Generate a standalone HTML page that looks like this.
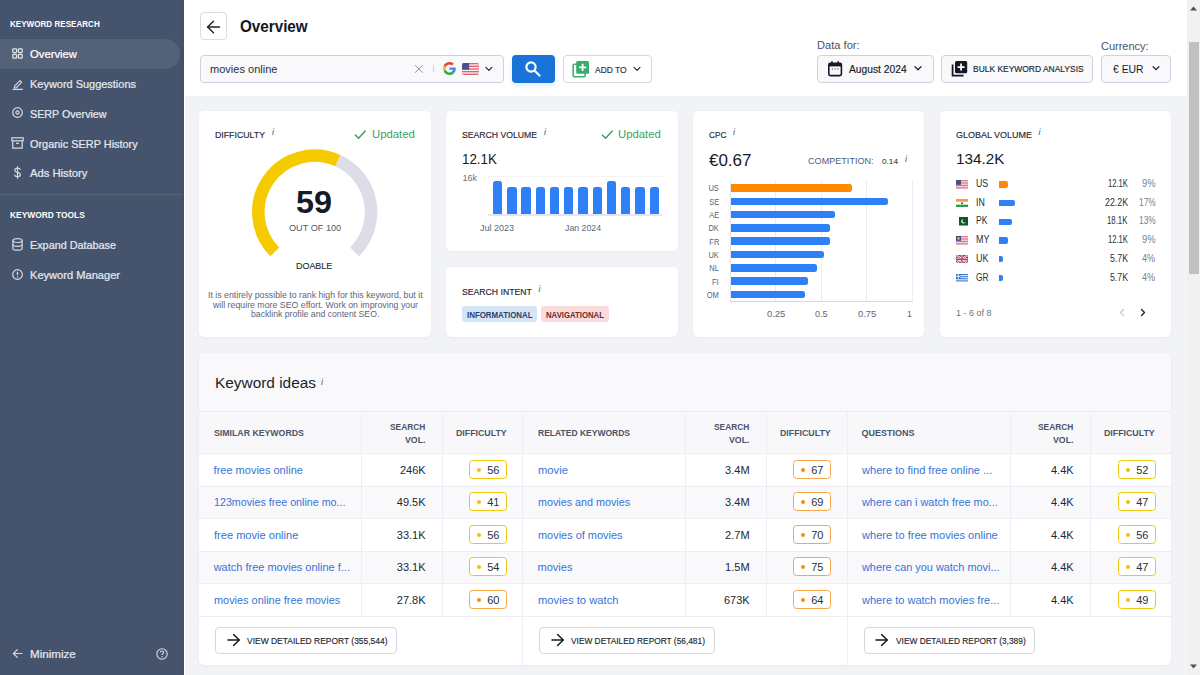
<!DOCTYPE html>
<html><head><meta charset="utf-8"><style>
html,body{margin:0;padding:0;width:1200px;height:675px;overflow:hidden;background:#f2f3f7}
body{position:relative;font-family:"Liberation Sans",sans-serif}
.t{position:absolute;white-space:nowrap}
.r{position:absolute;box-sizing:border-box}
</style></head><body>
<div class="r" style="left:0px;top:0px;width:1200px;height:675px;background:#f2f3f7"></div>
<div class="r" style="left:0px;top:0px;width:184px;height:675px;background:#45546c"></div>
<div class="r" style="left:182px;top:0px;width:1px;height:675px;background:#3e4c63"></div>
<div class="r" style="left:184px;top:0px;width:1px;height:675px;background:#ffffff"></div>
<div class="r" style="left:184px;top:0px;width:1003px;height:96px;background:#fff"></div>
<div class="t" style="left:9.50px;top:19.00px;font-size:9.4px;line-height:9.4px;color:#ffffff;font-weight:700;transform:scaleX(0.8618);transform-origin:left top;">KEYWORD RESEARCH</div>
<div class="r" style="left:0px;top:39px;width:180px;height:30px;background:#536279;border-radius:0 15px 15px 0"></div>
<svg class="r" style="left:12px;top:48px" width="11" height="11" viewBox="0 0 11 11"><g fill="none" stroke="#dfe3ea" stroke-width="1.3"><rect x="0.8" y="0.8" width="3.8" height="3.8" rx="0.8"/><rect x="6.4" y="0.8" width="3.8" height="3.8" rx="0.8"/><rect x="0.8" y="6.4" width="3.8" height="3.8" rx="0.8"/><rect x="6.4" y="6.4" width="3.8" height="3.8" rx="0.8"/></g></svg>
<div class="t" style="left:30.00px;top:49.00px;font-size:11px;line-height:11px;color:#ffffff;font-weight:400;-webkit-text-stroke:0.24px #ffffff;transform:scaleX(1.0246);transform-origin:left top;">Overview</div>
<div class="t" style="left:30.00px;top:79.00px;font-size:11px;line-height:11px;color:#e3e7ee;font-weight:400;-webkit-text-stroke:0.24px #e3e7ee;transform:scaleX(0.9960);transform-origin:left top;">Keyword Suggestions</div>
<div class="t" style="left:30.00px;top:109.00px;font-size:11px;line-height:11px;color:#e3e7ee;font-weight:400;-webkit-text-stroke:0.24px #e3e7ee;transform:scaleX(0.9733);transform-origin:left top;">SERP Overview</div>
<div class="t" style="left:30.00px;top:139.00px;font-size:11px;line-height:11px;color:#e3e7ee;font-weight:400;-webkit-text-stroke:0.24px #e3e7ee;transform:scaleX(0.9915);transform-origin:left top;">Organic SERP History</div>
<div class="t" style="left:30.00px;top:168.00px;font-size:11px;line-height:11px;color:#e3e7ee;font-weight:400;-webkit-text-stroke:0.24px #e3e7ee;transform:scaleX(1.0212);transform-origin:left top;">Ads History</div>
<svg class="r" style="left:12px;top:78px" width="11" height="12" viewBox="0 0 11 12"><g fill="none" stroke="#d5dae3" stroke-width="1.2" stroke-linecap="round" stroke-linejoin="round"><path d="M2.5 8.2 L8 2.7 L9.6 4.3 L4.1 9.8 L2.3 10 Z"/><path d="M1 11.4 H10.5"/></g></svg>
<svg class="r" style="left:12px;top:107px" width="11" height="11" viewBox="0 0 11 11"><g fill="none" stroke="#d5dae3" stroke-width="1.2"><circle cx="5.5" cy="5.5" r="4.8"/><circle cx="5.5" cy="5.5" r="1.6"/></g></svg>
<svg class="r" style="left:11px;top:137px" width="13" height="12" viewBox="0 0 13 12"><g fill="none" stroke="#d5dae3" stroke-width="1.2"><rect x="0.8" y="0.8" width="11.4" height="3" /><path d="M1.8 3.8 V11.2 H11.2 V3.8"/><path d="M5 6.3 H8"/></g></svg>
<svg class="r" style="left:13px;top:166px" width="9" height="13" viewBox="0 0 9 13"><g fill="none" stroke="#d5dae3" stroke-width="1.2" stroke-linecap="round"><path d="M4.5 0.8 V12.2"/><path d="M7.3 3.4 C7 2.5 6 2.2 4.5 2.2 C3 2.2 1.8 2.9 1.8 4.2 C1.8 5.6 3 6 4.5 6.4 C6 6.8 7.4 7.3 7.4 8.7 C7.4 10 6.2 10.6 4.5 10.6 C3 10.6 2 10.2 1.6 9.2"/></g></svg>
<div class="r" style="left:0px;top:194px;width:182px;height:1px;background:#56657c"></div>
<div class="t" style="left:9.60px;top:210.00px;font-size:9.4px;line-height:9.4px;color:#ffffff;font-weight:700;transform:scaleX(0.8940);transform-origin:left top;">KEYWORD TOOLS</div>
<div class="t" style="left:30.00px;top:240.00px;font-size:11px;line-height:11px;color:#e3e7ee;font-weight:400;-webkit-text-stroke:0.24px #e3e7ee;transform:scaleX(0.9834);transform-origin:left top;">Expand Database</div>
<div class="t" style="left:30.00px;top:270.00px;font-size:11px;line-height:11px;color:#e3e7ee;font-weight:400;-webkit-text-stroke:0.24px #e3e7ee;transform:scaleX(1.0082);transform-origin:left top;">Keyword Manager</div>
<svg class="r" style="left:12px;top:238px" width="11" height="13" viewBox="0 0 11 13"><g fill="none" stroke="#d5dae3" stroke-width="1.2"><ellipse cx="5.5" cy="2.6" rx="4.6" ry="1.9"/><path d="M0.9 2.6 V10.4 C0.9 11.5 3 12.2 5.5 12.2 C8 12.2 10.1 11.5 10.1 10.4 V2.6"/><path d="M0.9 6.5 C0.9 7.6 3 8.3 5.5 8.3 C8 8.3 10.1 7.6 10.1 6.5"/></g></svg>
<svg class="r" style="left:12px;top:269px" width="11" height="11" viewBox="0 0 11 11"><g fill="none" stroke="#d5dae3" stroke-width="1.2"><circle cx="5.5" cy="5.5" r="4.8"/></g><path d="M5.5 2.8 V6.2" stroke="#d5dae3" stroke-width="1.3"/><circle cx="5.5" cy="8" r="0.7" fill="#d5dae3"/></svg>
<div class="t" style="left:30.00px;top:649.00px;font-size:11px;line-height:11px;color:#e3e7ee;font-weight:400;-webkit-text-stroke:0.24px #e3e7ee;transform:scaleX(1.0554);transform-origin:left top;">Minimize</div>
<svg class="r" style="left:12px;top:648px" width="11" height="11" viewBox="0 0 11 11"><g fill="none" stroke="#d5dae3" stroke-width="1.2" stroke-linecap="round" stroke-linejoin="round"><path d="M10 5.5 H1.5"/><path d="M5.3 1.6 L1.4 5.5 L5.3 9.4"/></g></svg>
<svg class="r" style="left:156px;top:648px" width="12" height="12" viewBox="0 0 12 12"><g fill="none" stroke="#d5dae3" stroke-width="1.1"><circle cx="6" cy="6" r="5.2"/><path d="M4.3 4.6 C4.3 3.6 5 3 6 3 C7 3 7.7 3.6 7.7 4.5 C7.7 5.6 6.1 5.8 6.1 7"/></g><circle cx="6.1" cy="8.7" r="0.7" fill="#d5dae3"/></svg>
<div class="r" style="left:200px;top:12px;width:27px;height:28px;border:1px solid #d9dbe6;border-radius:4px;background:#fff"></div>
<svg class="r" style="left:206px;top:20px" width="15" height="14" viewBox="0 0 15 14"><g fill="none" stroke="#1b1f2a" stroke-width="1.4" stroke-linecap="round" stroke-linejoin="round"><path d="M13.5 7 H1.8"/><path d="M7.5 1.3 L1.6 7 L7.5 12.7"/></g></svg>
<div class="t" style="left:240.30px;top:19.00px;font-size:16px;line-height:16px;color:#14171f;font-weight:700;transform:scaleX(0.9508);transform-origin:left top;">Overview</div>
<div class="r" style="left:200px;top:55px;width:304px;height:28px;border:1px solid #cfd2de;border-radius:4px;background:#f9f9fb"></div>
<div class="t" style="left:210.00px;top:64.00px;font-size:11px;line-height:11px;color:#2a2f3b;font-weight:400;transform:scaleX(1.0035);transform-origin:left top;">movies online</div>
<svg class="r" style="left:414px;top:64px" width="10" height="10" viewBox="0 0 10 10"><g stroke="#8e94a2" stroke-width="1.0" stroke-linecap="round"><path d="M1.3 1.3 L8.5 8.5 M8.5 1.3 L1.3 8.5"/></g></svg>
<div class="r" style="left:432.5px;top:65px;width:1.0px;height:7px;background:#d3d6de"></div>
<svg class="r" style="left:443px;top:62px" width="13" height="13" viewBox="0 0 48 48"><path fill="#EA4335" d="M24 9.5c3.54 0 6.71 1.22 9.21 3.6l6.85-6.85C35.9 2.38 30.47 0 24 0 14.62 0 6.51 5.38 2.56 13.220l7.98 6.19C12.43 13.72 17.74 9.5 24 9.5z"/><path fill="#4285F4" d="M46.98 24.55c0-1.57-.15-3.09-.38-4.55H24v9.02h12.94c-.58 2.96-2.26 5.480-4.78 7.18l7.73 6c4.51-4.18 7.09-10.36 7.09-17.65z"/><path fill="#FBBC05" d="M10.53 28.59c-.48-1.45-.76-2.99-.76-4.59s.27-3.14.76-4.59l-7.98-6.19C.92 16.46 0 20.12 0 24c0 3.88.92 7.54 2.56 10.78l7.97-6.19z"/><path fill="#34A853" d="M24 48c6.48 0 11.93-2.13 15.89-5.81l-7.73-6c-2.15 1.45-4.92 2.3-8.16 2.3-6.26 0-11.57-4.22-13.47-9.91l-7.98 6.19C6.51 42.620 14.62 48 24 48z"/></svg>
<svg class="r" style="left:462px;top:63px" width="17" height="12" viewBox="0 0 17 12"><clipPath id="c46263"><rect width="17" height="12" rx="2"/></clipPath><g clip-path="url(#c46263)"><rect width="17" height="12" fill="#f6eef0"/><rect y="0.00" width="17" height="1.33" fill="#de6474"/><rect y="2.67" width="17" height="1.33" fill="#de6474"/><rect y="5.33" width="17" height="1.33" fill="#de6474"/><rect y="8.00" width="17" height="1.33" fill="#de6474"/><rect y="10.67" width="17" height="1.33" fill="#de6474"/><rect width="7.14" height="6.67" fill="#4e5189"/></g></svg>
<svg class="r" style="left:484px;top:65px" width="10" height="8" viewBox="0 0 10 8"><path d="M1.9 2.4 L4.9 5.4 L7.9 2.4" fill="none" stroke="#1f2430" stroke-width="1.15" stroke-linecap="round" stroke-linejoin="round"/></svg>
<div class="r" style="left:512px;top:55px;width:43px;height:28px;background:#1a73d8;border-radius:4px;box-shadow:0 3px 5px rgba(26,115,216,0.12)"></div>
<svg class="r" style="left:524px;top:60px" width="18" height="18" viewBox="0 0 18 18"><g fill="none" stroke="#fff" stroke-width="2.2" stroke-linecap="round"><circle cx="7" cy="7" r="4.6"/><path d="M10.5 10.5 L15.5 15.5"/></g></svg>
<div class="r" style="left:563px;top:55px;width:89px;height:28px;border:1px solid #d3d5e1;border-radius:4px;background:#fff"></div>
<svg class="r" style="left:572px;top:60px" width="19" height="18" viewBox="0 0 19 18"><rect x="1.2" y="4.2" width="12" height="12.6" rx="1.2" fill="#fff" stroke="#3fae73" stroke-width="1.6"/><rect x="4.2" y="1" width="12.8" height="12.8" rx="1.5" fill="#39ab6c"/><path d="M10.6 3.8 V11 M7 7.4 H14.2" stroke="#fff" stroke-width="1.8"/></svg>
<div class="t" style="left:594.60px;top:66.00px;font-size:9px;line-height:9px;color:#2a2f3b;font-weight:400;-webkit-text-stroke:0.14px #2a2f3b;transform:scaleX(0.9418);transform-origin:left top;">ADD TO</div>
<svg class="r" style="left:632px;top:65px" width="10" height="8" viewBox="0 0 10 8"><path d="M2 2.3 L5 5.3 L8 2.3" fill="none" stroke="#1f2430" stroke-width="1.1" stroke-linecap="round" stroke-linejoin="round"/></svg>
<div class="t" style="left:817.40px;top:41.00px;font-size:10px;line-height:10px;color:#4b5262;font-weight:400;transform:scaleX(1.1108);transform-origin:left top;">Data for:</div>
<div class="r" style="left:817px;top:55px;width:117px;height:28px;border:1px solid #cfd2de;border-radius:4px;background:#f9f9fb"></div>
<svg class="r" style="left:827px;top:60px" width="17" height="18" viewBox="0 0 17 18"><rect x="1.8" y="3.2" width="12.6" height="12.4" rx="1.6" fill="none" stroke="#151a26" stroke-width="1.6"/><rect x="1.8" y="3.2" width="12.6" height="3.2" fill="#151a26"/><path d="M5 1.2 V4 M11.2 1.2 V4" stroke="#151a26" stroke-width="1.6"/><path d="M4.8 9 H5.8 M7.6 9 H8.6 M10.4 9 H11.4" stroke="#151a26" stroke-width="1"/></svg>
<div class="t" style="left:848.80px;top:64.00px;font-size:10.5px;line-height:10.5px;color:#181c26;font-weight:400;-webkit-text-stroke:0.14px #181c26;transform:scaleX(0.9770);transform-origin:left top;">August 2024</div>
<svg class="r" style="left:913px;top:64px" width="10" height="8" viewBox="0 0 10 8"><path d="M2 2.8 L5 5.8 L8 2.8" fill="none" stroke="#1f2430" stroke-width="1.3" stroke-linecap="round" stroke-linejoin="round"/></svg>
<div class="r" style="left:941px;top:55px;width:152px;height:28px;border:1px solid #cfd2de;border-radius:4px;background:#f9f9fb"></div>
<svg class="r" style="left:950px;top:60px" width="20" height="18" viewBox="0 0 20 18"><path d="M2.6 4.5 V15.6 H13.6" fill="none" stroke="#151a26" stroke-width="1.8"/><rect x="5" y="1" width="12.2" height="12.2" rx="1.5" fill="#151a26"/><path d="M11.1 3.6 V10.6 M7.6 7.1 H14.6" stroke="#fff" stroke-width="1.8"/></svg>
<div class="t" style="left:973.40px;top:65.00px;font-size:9px;line-height:9px;color:#20242e;font-weight:400;-webkit-text-stroke:0.14px #20242e;transform:scaleX(0.9384);transform-origin:left top;">BULK KEYWORD ANALYSIS</div>
<div class="t" style="left:1101.30px;top:42.00px;font-size:10.4px;line-height:10.4px;color:#4b5262;font-weight:400;transform:scaleX(1.0580);transform-origin:left top;">Currency:</div>
<div class="r" style="left:1101px;top:55px;width:70px;height:28px;border:1px solid #cfd2de;border-radius:4px;background:#f9f9fb"></div>
<div class="t" style="left:1112.60px;top:64.00px;font-size:11px;line-height:11px;color:#181c26;font-weight:400;transform:scaleX(0.9446);transform-origin:left top;">€ EUR</div>
<svg class="r" style="left:1151px;top:64px" width="10" height="8" viewBox="0 0 10 8"><path d="M2.2 2.8 L5 5.6 L7.8 2.8" fill="none" stroke="#1f2430" stroke-width="1.3" stroke-linecap="round" stroke-linejoin="round"/></svg>
<div class="r" style="left:1187px;top:0px;width:13px;height:675px;background:#f1f1f1"></div>
<div class="r" style="left:1188.5px;top:42px;width:10.0px;height:232px;background:#c1c1c1"></div>
<svg class="r" style="left:1188px;top:4px" width="11" height="8" viewBox="0 0 11 8"><path d="M2 6.5 L5.5 2.5 L9 6.5 Z" fill="#505050"/></svg>
<svg class="r" style="left:1188px;top:663px" width="11" height="8" viewBox="0 0 11 8"><path d="M2 1.5 L5.5 5.5 L9 1.5 Z" fill="#505050"/></svg>
<div class="r" style="left:199px;top:111px;width:232px;height:226px;background:#fff;border-radius:5px;box-shadow:0 0 1px rgba(40,50,90,0.06),0 1px 3px rgba(40,50,90,0.035)"></div>
<div class="r" style="left:446px;top:111px;width:232px;height:140px;background:#fff;border-radius:5px;box-shadow:0 0 1px rgba(40,50,90,0.06),0 1px 3px rgba(40,50,90,0.035)"></div>
<div class="r" style="left:446px;top:267px;width:232px;height:70px;background:#fff;border-radius:5px;box-shadow:0 0 1px rgba(40,50,90,0.06),0 1px 3px rgba(40,50,90,0.035)"></div>
<div class="r" style="left:693px;top:111px;width:231px;height:226px;background:#fff;border-radius:5px;box-shadow:0 0 1px rgba(40,50,90,0.06),0 1px 3px rgba(40,50,90,0.035)"></div>
<div class="r" style="left:940px;top:111px;width:231px;height:226px;background:#fff;border-radius:5px;box-shadow:0 0 1px rgba(40,50,90,0.06),0 1px 3px rgba(40,50,90,0.035)"></div>
<div class="t" style="left:215.00px;top:131.00px;font-size:8.5px;line-height:8.5px;color:#1f2532;font-weight:400;-webkit-text-stroke:0.14px #1f2532;transform:scaleX(1.0311);transform-origin:left top;">DIFFICULTY</div>
<div class="t" style="left:272.00px;top:128.00px;font-size:9px;line-height:9px;color:#4a5368;font-weight:400;font-style:italic;">i</div>
<svg class="r" style="left:353.75px;top:129px" width="13.0" height="11" viewBox="0 0 13.0 11"><path d="M1.3 6 L4.6 9.3 L11.2 2" fill="none" stroke="#2f9f5e" stroke-width="1.35" stroke-linecap="round" stroke-linejoin="round"/></svg>
<div class="t" style="left:371.60px;top:129.00px;font-size:10.5px;line-height:10.5px;color:#35a466;font-weight:400;transform:scaleX(1.0784);transform-origin:left top;">Updated</div>
<svg class="r" style="left:190px;top:140px" width="250" height="140" viewBox="0 0 250 140"><path d="M84.82 111.88 A56.4 56.4 0 0 1 147.91 20.60" fill="none" stroke="#f5cb00" stroke-width="12.5"/><path d="M147.91 20.60 A56.4 56.4 0 0 1 164.58 111.88" fill="none" stroke="#dcdde6" stroke-width="12.5"/></svg>
<div class="t" style="left:296.40px;top:187.00px;font-size:30.5px;line-height:30.5px;color:#151a26;font-weight:700;transform:scaleX(1.0604);transform-origin:left top;">59</div>
<div class="t" style="left:288.80px;top:223.00px;font-size:9.5px;line-height:9.5px;color:#4f5868;font-weight:400;transform:scaleX(0.9631);transform-origin:left top;">OUT OF 100</div>
<div class="t" style="left:296.40px;top:262.00px;font-size:9.2px;line-height:9.2px;color:#262b36;font-weight:400;-webkit-text-stroke:0.14px #262b36;transform:scaleX(0.9730);transform-origin:left top;">DOABLE</div>
<div class="t" style="left:207.70px;top:291.00px;font-size:9px;line-height:9px;color:#5b6579;font-weight:400;transform:scaleX(0.9728);transform-origin:left top;">It is entirely possible to rank high for this keyword, but it</div>
<div class="t" style="left:212.54px;top:301.00px;font-size:9px;line-height:9px;color:#5b6579;font-weight:400;transform:scaleX(0.9749);transform-origin:left top;">will require more SEO effort. Work on improving your</div>
<div class="t" style="left:250.85px;top:310.00px;font-size:9px;line-height:9px;color:#5b6579;font-weight:400;transform:scaleX(0.9642);transform-origin:left top;">backlink profile and content SEO.</div>
<div class="t" style="left:462.00px;top:131.00px;font-size:8.5px;line-height:8.5px;color:#1f2532;font-weight:400;-webkit-text-stroke:0.14px #1f2532;transform:scaleX(1.0177);transform-origin:left top;">SEARCH VOLUME</div>
<div class="t" style="left:544.00px;top:128.00px;font-size:9px;line-height:9px;color:#4a5368;font-weight:400;font-style:italic;">i</div>
<svg class="r" style="left:600.5px;top:129px" width="13.0" height="11" viewBox="0 0 13.0 11"><path d="M1.3 6 L4.6 9.3 L11.2 2" fill="none" stroke="#2f9f5e" stroke-width="1.35" stroke-linecap="round" stroke-linejoin="round"/></svg>
<div class="t" style="left:618.30px;top:129.00px;font-size:10.5px;line-height:10.5px;color:#35a466;font-weight:400;transform:scaleX(1.0784);transform-origin:left top;">Updated</div>
<div class="t" style="left:462.00px;top:152.00px;font-size:14px;line-height:14px;color:#151a26;font-weight:400;transform:scaleX(0.9533);transform-origin:left top;">12.1K</div>
<div class="t" style="left:462.50px;top:174.00px;font-size:9px;line-height:9px;color:#6b7383;font-weight:400;">16k</div>
<div class="r" style="left:488px;top:176px;width:174px;height:1px;border-top:1px dotted #e6e8ee"></div>
<div class="r" style="left:488px;top:214px;width:174px;height:1.5px;background:#e4e6ee"></div>
<div class="r" style="left:493.0px;top:181.3px;width:9.300000000000011px;height:33.0px;background:#2f80f7;border-radius:2.5px 2.5px 0 0"></div>
<div class="r" style="left:507.23px;top:187.3px;width:9.299999999999955px;height:27.0px;background:#2f80f7;border-radius:2.5px 2.5px 0 0"></div>
<div class="r" style="left:521.46px;top:187.3px;width:9.299999999999955px;height:27.0px;background:#2f80f7;border-radius:2.5px 2.5px 0 0"></div>
<div class="r" style="left:535.69px;top:187.3px;width:9.299999999999955px;height:27.0px;background:#2f80f7;border-radius:2.5px 2.5px 0 0"></div>
<div class="r" style="left:549.92px;top:187.3px;width:9.300000000000068px;height:27.0px;background:#2f80f7;border-radius:2.5px 2.5px 0 0"></div>
<div class="r" style="left:564.15px;top:187.3px;width:9.300000000000068px;height:27.0px;background:#2f80f7;border-radius:2.5px 2.5px 0 0"></div>
<div class="r" style="left:578.38px;top:187.3px;width:9.299999999999955px;height:27.0px;background:#2f80f7;border-radius:2.5px 2.5px 0 0"></div>
<div class="r" style="left:592.61px;top:187.3px;width:9.299999999999955px;height:27.0px;background:#2f80f7;border-radius:2.5px 2.5px 0 0"></div>
<div class="r" style="left:606.84px;top:181.3px;width:9.299999999999955px;height:33.0px;background:#2f80f7;border-radius:2.5px 2.5px 0 0"></div>
<div class="r" style="left:621.07px;top:187.3px;width:9.299999999999955px;height:27.0px;background:#2f80f7;border-radius:2.5px 2.5px 0 0"></div>
<div class="r" style="left:635.3px;top:187.3px;width:9.300000000000068px;height:27.0px;background:#2f80f7;border-radius:2.5px 2.5px 0 0"></div>
<div class="r" style="left:649.53px;top:187.3px;width:9.300000000000068px;height:27.0px;background:#2f80f7;border-radius:2.5px 2.5px 0 0"></div>
<div class="t" style="left:480.25px;top:224.00px;font-size:9.3px;line-height:9.3px;color:#5e6677;font-weight:400;transform:scaleX(0.9672);transform-origin:left top;">Jul 2023</div>
<div class="t" style="left:564.70px;top:224.00px;font-size:9.3px;line-height:9.3px;color:#5e6677;font-weight:400;transform:scaleX(0.9433);transform-origin:left top;">Jan 2024</div>
<div class="t" style="left:462.00px;top:288.00px;font-size:8.8px;line-height:8.8px;color:#1f2532;font-weight:400;-webkit-text-stroke:0.14px #1f2532;transform:scaleX(0.9847);transform-origin:left top;">SEARCH INTENT</div>
<div class="t" style="left:538.50px;top:285.00px;font-size:9px;line-height:9px;color:#4a5368;font-weight:400;font-style:italic;">i</div>
<div class="r" style="left:462px;top:306px;width:75px;height:16px;background:#d5e5f8;border-radius:3px"></div>
<div class="t" style="left:466.70px;top:311.00px;font-size:8.3px;line-height:8.3px;color:#27406b;font-weight:700;transform:scaleX(0.9505);transform-origin:left top;">INFORMATIONAL</div>
<div class="r" style="left:541px;top:306px;width:68px;height:16px;background:#fadcdc;border-radius:3px"></div>
<div class="t" style="left:545.70px;top:311.00px;font-size:8.3px;line-height:8.3px;color:#6e2b2b;font-weight:700;transform:scaleX(0.9361);transform-origin:left top;">NAVIGATIONAL</div>
<div class="t" style="left:708.80px;top:131.00px;font-size:8.5px;line-height:8.5px;color:#1f2532;font-weight:400;-webkit-text-stroke:0.14px #1f2532;transform:scaleX(0.9702);transform-origin:left top;">CPC</div>
<div class="t" style="left:733.00px;top:128.00px;font-size:9px;line-height:9px;color:#4a5368;font-weight:400;font-style:italic;">i</div>
<div class="t" style="left:708.80px;top:153.00px;font-size:15.6px;line-height:15.6px;color:#151a26;font-weight:400;transform:scaleX(1.0876);transform-origin:left top;">€0.67</div>
<div class="t" style="left:808.20px;top:157.00px;font-size:9px;line-height:9px;color:#4f5d78;font-weight:400;transform:scaleX(1.0095);transform-origin:left top;">COMPETITION:</div>
<div class="t" style="left:882.40px;top:158.00px;font-size:8px;line-height:8px;color:#1c2130;font-weight:400;transform:scaleX(1.0283);transform-origin:left top;">0.14</div>
<div class="t" style="left:905.00px;top:155.00px;font-size:9px;line-height:9px;color:#4a5368;font-weight:400;font-style:italic;">i</div>
<div class="r" style="left:775.0px;top:181px;width:1.0px;height:120px;background:#ecedf2"></div>
<div class="r" style="left:820.5px;top:181px;width:1.0px;height:120px;background:#ecedf2"></div>
<div class="r" style="left:866.0px;top:181px;width:1.0px;height:120px;background:#ecedf2"></div>
<div class="r" style="left:911.5px;top:181px;width:1.0px;height:120px;background:#ecedf2"></div>
<div class="r" style="left:729.5px;top:181px;width:1.0px;height:120px;background:#e3e5ec"></div>
<div class="r" style="left:730px;top:300.5px;width:183px;height:1.1999999999999886px;background:#cfd8f0"></div>
<div class="r" style="left:730.5px;top:184.2px;width:121.0px;height:7.5px;background:#ff8a00;border-radius:0 2.5px 2.5px 0"></div>
<div class="t" style="left:707.18px;top:184.00px;font-size:8.5px;line-height:8.5px;color:#56637a;font-weight:400;transform:scaleX(0.88);transform-origin:right top;">US</div>
<div class="r" style="left:730.5px;top:197.5px;width:157.5px;height:7.5px;background:#2f80f7;border-radius:0 2.5px 2.5px 0"></div>
<div class="t" style="left:707.65px;top:198.00px;font-size:8.5px;line-height:8.5px;color:#56637a;font-weight:400;transform:scaleX(0.88);transform-origin:right top;">SE</div>
<div class="r" style="left:730.5px;top:210.8px;width:104.5px;height:7.5px;background:#2f80f7;border-radius:0 2.5px 2.5px 0"></div>
<div class="t" style="left:707.65px;top:211.00px;font-size:8.5px;line-height:8.5px;color:#56637a;font-weight:400;transform:scaleX(0.88);transform-origin:right top;">AE</div>
<div class="r" style="left:730.5px;top:224.1px;width:99.20000000000005px;height:7.5px;background:#2f80f7;border-radius:0 2.5px 2.5px 0"></div>
<div class="t" style="left:707.18px;top:224.00px;font-size:8.5px;line-height:8.5px;color:#56637a;font-weight:400;transform:scaleX(0.88);transform-origin:right top;">DK</div>
<div class="r" style="left:730.5px;top:237.4px;width:99.20000000000005px;height:7.5px;background:#2f80f7;border-radius:0 2.5px 2.5px 0"></div>
<div class="t" style="left:707.65px;top:238.00px;font-size:8.5px;line-height:8.5px;color:#56637a;font-weight:400;transform:scaleX(0.88);transform-origin:right top;">FR</div>
<div class="r" style="left:730.5px;top:250.7px;width:93.5px;height:7.5px;background:#2f80f7;border-radius:0 2.5px 2.5px 0"></div>
<div class="t" style="left:707.18px;top:251.00px;font-size:8.5px;line-height:8.5px;color:#56637a;font-weight:400;transform:scaleX(0.88);transform-origin:right top;">UK</div>
<div class="r" style="left:730.5px;top:264.0px;width:86.5px;height:7.5px;background:#2f80f7;border-radius:0 2.5px 2.5px 0"></div>
<div class="t" style="left:708.12px;top:264.00px;font-size:8.5px;line-height:8.5px;color:#56637a;font-weight:400;transform:scaleX(0.88);transform-origin:right top;">NL</div>
<div class="r" style="left:730.5px;top:277.3px;width:77.29999999999995px;height:7.5px;background:#2f80f7;border-radius:0 2.5px 2.5px 0"></div>
<div class="t" style="left:711.43px;top:278.00px;font-size:8.5px;line-height:8.5px;color:#56637a;font-weight:400;transform:scaleX(0.88);transform-origin:right top;">FI</div>
<div class="r" style="left:730.5px;top:290.6px;width:74.0px;height:7.5px;background:#2f80f7;border-radius:0 2.5px 2.5px 0"></div>
<div class="t" style="left:705.32px;top:291.00px;font-size:8.5px;line-height:8.5px;color:#56637a;font-weight:400;transform:scaleX(0.88);transform-origin:right top;">OM</div>
<div class="t" style="left:766.85px;top:310.00px;font-size:8.7px;line-height:8.7px;color:#5e6677;font-weight:400;transform:scaleX(1.0815);transform-origin:left top;">0.25</div>
<div class="t" style="left:815.25px;top:310.00px;font-size:8.7px;line-height:8.7px;color:#5e6677;font-weight:400;transform:scaleX(1.0337);transform-origin:left top;">0.5</div>
<div class="t" style="left:857.85px;top:310.00px;font-size:8.7px;line-height:8.7px;color:#5e6677;font-weight:400;transform:scaleX(1.0815);transform-origin:left top;">0.75</div>
<div class="t" style="left:906.97px;top:310.00px;font-size:8.7px;line-height:8.7px;color:#5e6677;font-weight:400;">1</div>
<div class="t" style="left:955.70px;top:131.00px;font-size:8.5px;line-height:8.5px;color:#1f2532;font-weight:400;-webkit-text-stroke:0.14px #1f2532;transform:scaleX(1.0563);transform-origin:left top;">GLOBAL VOLUME</div>
<div class="t" style="left:1038.50px;top:128.00px;font-size:9px;line-height:9px;color:#4a5368;font-weight:400;font-style:italic;">i</div>
<div class="t" style="left:955.90px;top:151.00px;font-size:15px;line-height:15px;color:#151a26;font-weight:400;transform:scaleX(1.0158);transform-origin:left top;">134.2K</div>
<svg class="r" style="left:956px;top:180.05px" width="12" height="8.5" viewBox="0 0 12 8.5"><rect width="12" height="8.5" fill="#f3d3d8"/><rect y="0.00" width="12" height="1.21" fill="#e07d8c"/><rect y="2.43" width="12" height="1.21" fill="#e07d8c"/><rect y="4.86" width="12" height="1.21" fill="#e07d8c"/><rect y="7.29" width="12" height="1.21" fill="#e07d8c"/><rect width="5" height="4.86" fill="#4a4f86"/></svg>
<div class="t" style="left:976.00px;top:179.00px;font-size:10px;line-height:10px;color:#2a2f3b;font-weight:400;transform:scaleX(0.8813);transform-origin:left top;">US</div>
<div class="r" style="left:999px;top:181.1px;width:8.700000000000045px;height:6.5px;background:#ff8a00;border-radius:0 2px 2px 0"></div>
<div class="t" style="left:1107.90px;top:179.00px;font-size:10px;line-height:10px;color:#2a2f3b;font-weight:400;transform:scaleX(0.7610);transform-origin:left top;">12.1K</div>
<div class="t" style="left:1141.90px;top:179.00px;font-size:10px;line-height:10px;color:#7a8190;font-weight:400;transform:scaleX(0.9273);transform-origin:left top;">9%</div>
<svg class="r" style="left:956px;top:198.75px" width="12" height="8.5" viewBox="0 0 12 8.5"><rect width="12" height="2.83" fill="#f59d3a"/><rect y="2.83" width="12" height="2.83" fill="#fff"/><rect y="5.67" width="12" height="2.83" fill="#2f9a3e"/><circle cx="6" cy="4.25" r="1" fill="#3a4a9a"/></svg>
<div class="t" style="left:976.00px;top:198.00px;font-size:10px;line-height:10px;color:#2a2f3b;font-weight:400;transform:scaleX(0.8800);transform-origin:left top;">IN</div>
<div class="r" style="left:999px;top:199.8px;width:16.299999999999955px;height:6.5px;background:#2f80f7;border-radius:0 2px 2px 0"></div>
<div class="t" style="left:1104.60px;top:198.00px;font-size:10px;line-height:10px;color:#2a2f3b;font-weight:400;transform:scaleX(0.8872);transform-origin:left top;">22.2K</div>
<div class="t" style="left:1138.60px;top:198.00px;font-size:10px;line-height:10px;color:#7a8190;font-weight:400;transform:scaleX(0.8350);transform-origin:left top;">17%</div>
<svg class="r" style="left:956px;top:217.45px" width="12" height="8.5" viewBox="0 0 12 8.5"><rect x="3" width="9" height="8.5" fill="#0b5a2a"/><rect width="3" height="8.5" fill="#fff"/><circle cx="7.6" cy="4.2" r="2.3" fill="#fff"/><circle cx="8.4" cy="3.7" r="2" fill="#0b5a2a"/></svg>
<div class="t" style="left:976.00px;top:216.00px;font-size:10px;line-height:10px;color:#2a2f3b;font-weight:400;transform:scaleX(0.8539);transform-origin:left top;">PK</div>
<div class="r" style="left:999px;top:218.5px;width:13.299999999999955px;height:6.5px;background:#2f80f7;border-radius:0 2px 2px 0"></div>
<div class="t" style="left:1107.40px;top:216.00px;font-size:10px;line-height:10px;color:#2a2f3b;font-weight:400;transform:scaleX(0.7801);transform-origin:left top;">18.1K</div>
<div class="t" style="left:1138.60px;top:216.00px;font-size:10px;line-height:10px;color:#7a8190;font-weight:400;transform:scaleX(0.8350);transform-origin:left top;">13%</div>
<svg class="r" style="left:956px;top:236.15px" width="12" height="8.5" viewBox="0 0 12 8.5"><rect width="12" height="8.5" fill="#f3d3d8"/><rect y="0.00" width="12" height="1.21" fill="#e07d8c"/><rect y="2.43" width="12" height="1.21" fill="#e07d8c"/><rect y="4.86" width="12" height="1.21" fill="#e07d8c"/><rect y="7.29" width="12" height="1.21" fill="#e07d8c"/><rect width="5" height="4.86" fill="#3a4a9a"/><circle cx="2.5" cy="2.4" r="1.2" fill="#f2d24a"/></svg>
<div class="t" style="left:976.00px;top:235.00px;font-size:10px;line-height:10px;color:#2a2f3b;font-weight:400;transform:scaleX(0.8933);transform-origin:left top;">MY</div>
<div class="r" style="left:999px;top:237.2px;width:8.700000000000045px;height:6.5px;background:#2f80f7;border-radius:0 2px 2px 0"></div>
<div class="t" style="left:1107.90px;top:235.00px;font-size:10px;line-height:10px;color:#2a2f3b;font-weight:400;transform:scaleX(0.7610);transform-origin:left top;">12.1K</div>
<div class="t" style="left:1141.90px;top:235.00px;font-size:10px;line-height:10px;color:#7a8190;font-weight:400;transform:scaleX(0.9273);transform-origin:left top;">9%</div>
<svg class="r" style="left:956px;top:254.85px" width="12" height="8.500000000000028" viewBox="0 0 12 8.5"><rect width="12" height="8.5" fill="#2b3d8f"/><path d="M0 0 L12 8.5 M12 0 L0 8.5" stroke="#fff" stroke-width="2"/><path d="M0 0 L12 8.5 M12 0 L0 8.5" stroke="#d7323d" stroke-width="0.8"/><path d="M6 0 V8.5 M0 4.25 H12" stroke="#fff" stroke-width="2.6"/><path d="M6 0 V8.5 M0 4.25 H12" stroke="#d7323d" stroke-width="1.4"/></svg>
<div class="t" style="left:976.00px;top:254.00px;font-size:10px;line-height:10px;color:#2a2f3b;font-weight:400;transform:scaleX(0.8993);transform-origin:left top;">UK</div>
<div class="r" style="left:999px;top:255.9px;width:4px;height:6.499999999999972px;background:#2f80f7;border-radius:0 2px 2px 0"></div>
<div class="t" style="left:1109.80px;top:254.00px;font-size:10px;line-height:10px;color:#2a2f3b;font-weight:400;transform:scaleX(0.8759);transform-origin:left top;">5.7K</div>
<div class="t" style="left:1142.20px;top:254.00px;font-size:10px;line-height:10px;color:#7a8190;font-weight:400;transform:scaleX(0.9066);transform-origin:left top;">4%</div>
<svg class="r" style="left:956px;top:273.55px" width="12" height="8.5" viewBox="0 0 12 8.5"><rect width="12" height="8.5" fill="#fff"/><rect y="0.00" width="12" height="0.94" fill="#2a6fd0"/><rect y="1.89" width="12" height="0.94" fill="#2a6fd0"/><rect y="3.78" width="12" height="0.94" fill="#2a6fd0"/><rect y="5.67" width="12" height="0.94" fill="#2a6fd0"/><rect y="7.56" width="12" height="0.94" fill="#2a6fd0"/><rect width="4.6" height="4.72" fill="#2a6fd0"/><path d="M2.3 0 V4.72 M0 2.36 H4.6" stroke="#fff" stroke-width="0.9"/></svg>
<div class="t" style="left:976.00px;top:273.00px;font-size:10px;line-height:10px;color:#2a2f3b;font-weight:400;transform:scaleX(0.8333);transform-origin:left top;">GR</div>
<div class="r" style="left:999px;top:274.6px;width:4px;height:6.5px;background:#2f80f7;border-radius:0 2px 2px 0"></div>
<div class="t" style="left:1109.80px;top:273.00px;font-size:10px;line-height:10px;color:#2a2f3b;font-weight:400;transform:scaleX(0.8759);transform-origin:left top;">5.7K</div>
<div class="t" style="left:1142.20px;top:273.00px;font-size:10px;line-height:10px;color:#7a8190;font-weight:400;transform:scaleX(0.9066);transform-origin:left top;">4%</div>
<div class="t" style="left:955.60px;top:309.00px;font-size:9.2px;line-height:9.2px;color:#6b7383;font-weight:400;transform:scaleX(0.9809);transform-origin:left top;">1 - 6 of 8</div>
<svg class="r" style="left:1118px;top:308px" width="8" height="9" viewBox="0 0 8 9"><path d="M5.5 1.5 L2.5 4.5 L5.5 7.5" fill="none" stroke="#c3c7d1" stroke-width="1.2" stroke-linecap="round" stroke-linejoin="round"/></svg>
<svg class="r" style="left:1139px;top:308px" width="8" height="9" viewBox="0 0 8 9"><path d="M2.5 1.5 L5.5 4.5 L2.5 7.5" fill="none" stroke="#1f2430" stroke-width="1.4" stroke-linecap="round" stroke-linejoin="round"/></svg>
<div class="r" style="left:199px;top:353px;width:972px;height:312px;background:#fff;border-radius:5px;box-shadow:0 0 1px rgba(40,50,90,0.06),0 1px 3px rgba(40,50,90,0.035)"></div>
<div class="r" style="left:199px;top:353px;width:972px;height:59px;background:#f9f9fb;border-radius:5px 5px 0 0"></div>
<div class="t" style="left:215.40px;top:375.00px;font-size:15.5px;line-height:15.5px;color:#1b1f2a;font-weight:400;transform:scaleX(0.9933);transform-origin:left top;">Keyword ideas</div>
<div class="t" style="left:321.00px;top:378.00px;font-size:9px;line-height:9px;color:#4a5368;font-weight:400;font-style:italic;">i</div>
<div class="r" style="left:199px;top:411px;width:972px;height:1px;background:#eceef3"></div>
<div class="r" style="left:199px;top:412px;width:972px;height:41.5px;background:#f8f8fb"></div>
<div class="r" style="left:199px;top:453px;width:972px;height:1px;background:#eceef3"></div>
<div class="r" style="left:199px;top:486px;width:972px;height:1px;background:#eceef3"></div>
<div class="r" style="left:199px;top:487px;width:972px;height:31px;background:#f9f9fc"></div>
<div class="r" style="left:199px;top:518px;width:972px;height:1px;background:#eceef3"></div>
<div class="r" style="left:199px;top:551px;width:972px;height:1px;background:#eceef3"></div>
<div class="r" style="left:199px;top:552px;width:972px;height:31px;background:#f9f9fc"></div>
<div class="r" style="left:199px;top:583px;width:972px;height:1px;background:#eceef3"></div>
<div class="r" style="left:199px;top:616px;width:972px;height:1px;background:#eceef3"></div>
<div class="r" style="left:360.9px;top:412.5px;width:1.0px;height:203.5px;background:#eceef3"></div>
<div class="r" style="left:441.5px;top:412.5px;width:1.0px;height:203.5px;background:#eceef3"></div>
<div class="r" style="left:684.8px;top:412.5px;width:1.0px;height:203.5px;background:#eceef3"></div>
<div class="r" style="left:765.9px;top:412.5px;width:1.0px;height:203.5px;background:#eceef3"></div>
<div class="r" style="left:1009.8px;top:412.5px;width:1.0px;height:203.5px;background:#eceef3"></div>
<div class="r" style="left:1090.3px;top:412.5px;width:1.0px;height:203.5px;background:#eceef3"></div>
<div class="r" style="left:521.7px;top:412.5px;width:1.0px;height:252.5px;background:#eceef3"></div>
<div class="r" style="left:846.7px;top:412.5px;width:1.0px;height:252.5px;background:#eceef3"></div>
<div class="t" style="left:213.50px;top:429.00px;font-size:9px;line-height:9px;color:#4a5468;font-weight:700;transform:scaleX(0.9717);transform-origin:left top;">SIMILAR KEYWORDS</div>
<div class="t" style="left:390.40px;top:423.00px;font-size:9px;line-height:9px;color:#4a5468;font-weight:700;transform:scaleX(0.9283);transform-origin:left top;">SEARCH</div>
<div class="t" style="left:405.40px;top:436.00px;font-size:9px;line-height:9px;color:#4a5468;font-weight:700;transform:scaleX(0.9755);transform-origin:left top;">VOL.</div>
<div class="t" style="left:455.70px;top:429.00px;font-size:9px;line-height:9px;color:#4a5468;font-weight:700;transform:scaleX(0.9780);transform-origin:left top;">DIFFICULTY</div>
<div class="t" style="left:213.60px;top:465.00px;font-size:11px;line-height:11px;color:#3573d6;font-weight:400;">free movies online</div>
<div class="t" style="left:399.92px;top:465.00px;font-size:11px;line-height:11px;color:#222733;font-weight:400;">246K</div>
<div class="r" style="left:469px;top:460px;width:38px;height:19px;border:1px solid #f2c80f;border-radius:3.5px;background:#fff"></div>
<div class="r" style="left:476.6px;top:467.6px;width:4.7999999999999545px;height:4.7999999999999545px;background:#f2c200;border-radius:50%"></div>
<div class="t" style="left:487.19px;top:465.00px;font-size:11px;line-height:11px;color:#2a2f3a;font-weight:400;">56</div>
<div class="t" style="left:213.60px;top:497.00px;font-size:11px;line-height:11px;color:#3573d6;font-weight:400;transform:scaleX(0.9731);transform-origin:left top;">123movies free online mo...</div>
<div class="t" style="left:396.84px;top:497.00px;font-size:11px;line-height:11px;color:#222733;font-weight:400;">49.5K</div>
<div class="r" style="left:469px;top:492px;width:38px;height:19px;border:1px solid #f2c80f;border-radius:3.5px;background:#fff"></div>
<div class="r" style="left:476.6px;top:499.6px;width:4.7999999999999545px;height:4.7999999999999545px;background:#f2c200;border-radius:50%"></div>
<div class="t" style="left:487.19px;top:497.00px;font-size:11px;line-height:11px;color:#2a2f3a;font-weight:400;">41</div>
<div class="t" style="left:213.60px;top:530.00px;font-size:11px;line-height:11px;color:#3573d6;font-weight:400;transform:scaleX(1.0064);transform-origin:left top;">free movie online</div>
<div class="t" style="left:396.84px;top:530.00px;font-size:11px;line-height:11px;color:#222733;font-weight:400;">33.1K</div>
<div class="r" style="left:469px;top:525px;width:38px;height:19px;border:1px solid #f2c80f;border-radius:3.5px;background:#fff"></div>
<div class="r" style="left:476.6px;top:532.6px;width:4.7999999999999545px;height:4.7999999999999545px;background:#f2c200;border-radius:50%"></div>
<div class="t" style="left:487.19px;top:530.00px;font-size:11px;line-height:11px;color:#2a2f3a;font-weight:400;">56</div>
<div class="t" style="left:213.65px;top:562.00px;font-size:11px;line-height:11px;color:#3573d6;font-weight:400;">watch free movies online f...</div>
<div class="t" style="left:396.84px;top:562.00px;font-size:11px;line-height:11px;color:#222733;font-weight:400;">33.1K</div>
<div class="r" style="left:469px;top:557px;width:38px;height:19px;border:1px solid #f2c80f;border-radius:3.5px;background:#fff"></div>
<div class="r" style="left:476.6px;top:564.6px;width:4.7999999999999545px;height:4.7999999999999545px;background:#f2c200;border-radius:50%"></div>
<div class="t" style="left:487.19px;top:562.00px;font-size:11px;line-height:11px;color:#2a2f3a;font-weight:400;">54</div>
<div class="t" style="left:213.60px;top:595.00px;font-size:11px;line-height:11px;color:#3573d6;font-weight:400;transform:scaleX(0.9925);transform-origin:left top;">movies online free movies</div>
<div class="t" style="left:396.84px;top:595.00px;font-size:11px;line-height:11px;color:#222733;font-weight:400;">27.8K</div>
<div class="r" style="left:469px;top:590px;width:38px;height:19px;border:1px solid #f8a748;border-radius:3.5px;background:#fff"></div>
<div class="r" style="left:476.6px;top:597.6px;width:4.7999999999999545px;height:4.7999999999999545px;background:#f98a0c;border-radius:50%"></div>
<div class="t" style="left:487.19px;top:595.00px;font-size:11px;line-height:11px;color:#2a2f3a;font-weight:400;">60</div>
<div class="r" style="left:215px;top:627px;width:182px;height:27px;border:1px solid #d3d5e1;border-radius:4px;background:#fff"></div>
<svg class="r" style="left:226.5px;top:633px" width="14.0" height="14" viewBox="0 0 14.0 14"><g fill="none" stroke="#151a26" stroke-width="1.5" stroke-linecap="round" stroke-linejoin="round"><path d="M1 7 H12.2"/><path d="M6.6 1.5 L12.2 7 L6.6 12.5"/></g></svg>
<div class="t" style="left:247.00px;top:637.00px;font-size:9px;line-height:9px;color:#20242e;font-weight:400;-webkit-text-stroke:0.14px #20242e;transform:scaleX(0.9396);transform-origin:left top;">VIEW DETAILED REPORT (355,544)</div>
<div class="t" style="left:537.50px;top:429.00px;font-size:9px;line-height:9px;color:#4a5468;font-weight:700;transform:scaleX(0.9452);transform-origin:left top;">RELATED KEYWORDS</div>
<div class="t" style="left:714.40px;top:423.00px;font-size:9px;line-height:9px;color:#4a5468;font-weight:700;transform:scaleX(0.9283);transform-origin:left top;">SEARCH</div>
<div class="t" style="left:729.40px;top:436.00px;font-size:9px;line-height:9px;color:#4a5468;font-weight:700;transform:scaleX(0.9755);transform-origin:left top;">VOL.</div>
<div class="t" style="left:779.70px;top:429.00px;font-size:9px;line-height:9px;color:#4a5468;font-weight:700;transform:scaleX(0.9780);transform-origin:left top;">DIFFICULTY</div>
<div class="t" style="left:537.60px;top:465.00px;font-size:11px;line-height:11px;color:#3573d6;font-weight:400;transform:scaleX(1.0180);transform-origin:left top;">movie</div>
<div class="t" style="left:725.12px;top:465.00px;font-size:11px;line-height:11px;color:#222733;font-weight:400;">3.4M</div>
<div class="r" style="left:793px;top:460px;width:38px;height:19px;border:1px solid #f8a748;border-radius:3.5px;background:#fff"></div>
<div class="r" style="left:800.6px;top:467.6px;width:4.7999999999999545px;height:4.7999999999999545px;background:#f98a0c;border-radius:50%"></div>
<div class="t" style="left:811.19px;top:465.00px;font-size:11px;line-height:11px;color:#2a2f3a;font-weight:400;">67</div>
<div class="t" style="left:537.60px;top:497.00px;font-size:11px;line-height:11px;color:#3573d6;font-weight:400;transform:scaleX(0.9781);transform-origin:left top;">movies and movies</div>
<div class="t" style="left:725.12px;top:497.00px;font-size:11px;line-height:11px;color:#222733;font-weight:400;">3.4M</div>
<div class="r" style="left:793px;top:492px;width:38px;height:19px;border:1px solid #f8a748;border-radius:3.5px;background:#fff"></div>
<div class="r" style="left:800.6px;top:499.6px;width:4.7999999999999545px;height:4.7999999999999545px;background:#f98a0c;border-radius:50%"></div>
<div class="t" style="left:811.19px;top:497.00px;font-size:11px;line-height:11px;color:#2a2f3a;font-weight:400;">69</div>
<div class="t" style="left:537.60px;top:530.00px;font-size:11px;line-height:11px;color:#3573d6;font-weight:400;transform:scaleX(0.9944);transform-origin:left top;">movies of movies</div>
<div class="t" style="left:725.12px;top:530.00px;font-size:11px;line-height:11px;color:#222733;font-weight:400;">2.7M</div>
<div class="r" style="left:793px;top:525px;width:38px;height:19px;border:1px solid #f8a748;border-radius:3.5px;background:#fff"></div>
<div class="r" style="left:800.6px;top:532.6px;width:4.7999999999999545px;height:4.7999999999999545px;background:#f98a0c;border-radius:50%"></div>
<div class="t" style="left:811.19px;top:530.00px;font-size:11px;line-height:11px;color:#2a2f3a;font-weight:400;">70</div>
<div class="t" style="left:537.60px;top:562.00px;font-size:11px;line-height:11px;color:#3573d6;font-weight:400;">movies</div>
<div class="t" style="left:725.12px;top:562.00px;font-size:11px;line-height:11px;color:#222733;font-weight:400;">1.5M</div>
<div class="r" style="left:793px;top:557px;width:38px;height:19px;border:1px solid #f8a748;border-radius:3.5px;background:#fff"></div>
<div class="r" style="left:800.6px;top:564.6px;width:4.7999999999999545px;height:4.7999999999999545px;background:#f98a0c;border-radius:50%"></div>
<div class="t" style="left:811.19px;top:562.00px;font-size:11px;line-height:11px;color:#2a2f3a;font-weight:400;">75</div>
<div class="t" style="left:537.60px;top:595.00px;font-size:11px;line-height:11px;color:#3573d6;font-weight:400;transform:scaleX(1.0207);transform-origin:left top;">movies to watch</div>
<div class="t" style="left:723.92px;top:595.00px;font-size:11px;line-height:11px;color:#222733;font-weight:400;">673K</div>
<div class="r" style="left:793px;top:590px;width:38px;height:19px;border:1px solid #f8a748;border-radius:3.5px;background:#fff"></div>
<div class="r" style="left:800.6px;top:597.6px;width:4.7999999999999545px;height:4.7999999999999545px;background:#f98a0c;border-radius:50%"></div>
<div class="t" style="left:811.19px;top:595.00px;font-size:11px;line-height:11px;color:#2a2f3a;font-weight:400;">64</div>
<div class="r" style="left:539.4px;top:627px;width:175.39999999999998px;height:27px;border:1px solid #d3d5e1;border-radius:4px;background:#fff"></div>
<svg class="r" style="left:550.9px;top:633px" width="14.0" height="14" viewBox="0 0 14.0 14"><g fill="none" stroke="#151a26" stroke-width="1.5" stroke-linecap="round" stroke-linejoin="round"><path d="M1 7 H12.2"/><path d="M6.6 1.5 L12.2 7 L6.6 12.5"/></g></svg>
<div class="t" style="left:571.40px;top:637.00px;font-size:9px;line-height:9px;color:#20242e;font-weight:400;-webkit-text-stroke:0.14px #20242e;transform:scaleX(0.9264);transform-origin:left top;">VIEW DETAILED REPORT (56,481)</div>
<div class="t" style="left:861.50px;top:429.00px;font-size:9px;line-height:9px;color:#4a5468;font-weight:700;">QUESTIONS</div>
<div class="t" style="left:1038.40px;top:423.00px;font-size:9px;line-height:9px;color:#4a5468;font-weight:700;transform:scaleX(0.9283);transform-origin:left top;">SEARCH</div>
<div class="t" style="left:1053.40px;top:436.00px;font-size:9px;line-height:9px;color:#4a5468;font-weight:700;transform:scaleX(0.9755);transform-origin:left top;">VOL.</div>
<div class="t" style="left:1103.70px;top:429.00px;font-size:9px;line-height:9px;color:#4a5468;font-weight:700;transform:scaleX(0.9780);transform-origin:left top;">DIFFICULTY</div>
<div class="t" style="left:861.66px;top:465.00px;font-size:11px;line-height:11px;color:#3573d6;font-weight:400;transform:scaleX(1.0047);transform-origin:left top;">where to find free online ...</div>
<div class="t" style="left:1050.99px;top:465.00px;font-size:11px;line-height:11px;color:#222733;font-weight:400;">4.4K</div>
<div class="r" style="left:1118px;top:460px;width:38px;height:19px;border:1px solid #f2c80f;border-radius:3.5px;background:#fff"></div>
<div class="r" style="left:1125.6px;top:467.6px;width:4.800000000000182px;height:4.7999999999999545px;background:#f2c200;border-radius:50%"></div>
<div class="t" style="left:1136.19px;top:465.00px;font-size:11px;line-height:11px;color:#2a2f3a;font-weight:400;">52</div>
<div class="t" style="left:861.65px;top:497.00px;font-size:11px;line-height:11px;color:#3573d6;font-weight:400;transform:scaleX(0.9868);transform-origin:left top;">where can i watch free mo...</div>
<div class="t" style="left:1050.99px;top:497.00px;font-size:11px;line-height:11px;color:#222733;font-weight:400;">4.4K</div>
<div class="r" style="left:1118px;top:492px;width:38px;height:19px;border:1px solid #f2c80f;border-radius:3.5px;background:#fff"></div>
<div class="r" style="left:1125.6px;top:499.6px;width:4.800000000000182px;height:4.7999999999999545px;background:#f2c200;border-radius:50%"></div>
<div class="t" style="left:1136.19px;top:497.00px;font-size:11px;line-height:11px;color:#2a2f3a;font-weight:400;">47</div>
<div class="t" style="left:861.66px;top:530.00px;font-size:11px;line-height:11px;color:#3573d6;font-weight:400;transform:scaleX(1.0090);transform-origin:left top;">where to free movies online</div>
<div class="t" style="left:1050.99px;top:530.00px;font-size:11px;line-height:11px;color:#222733;font-weight:400;">4.4K</div>
<div class="r" style="left:1118px;top:525px;width:38px;height:19px;border:1px solid #f2c80f;border-radius:3.5px;background:#fff"></div>
<div class="r" style="left:1125.6px;top:532.6px;width:4.800000000000182px;height:4.7999999999999545px;background:#f2c200;border-radius:50%"></div>
<div class="t" style="left:1136.19px;top:530.00px;font-size:11px;line-height:11px;color:#2a2f3a;font-weight:400;">56</div>
<div class="t" style="left:861.65px;top:562.00px;font-size:11px;line-height:11px;color:#3573d6;font-weight:400;transform:scaleX(0.9905);transform-origin:left top;">where can you watch movi...</div>
<div class="t" style="left:1050.99px;top:562.00px;font-size:11px;line-height:11px;color:#222733;font-weight:400;">4.4K</div>
<div class="r" style="left:1118px;top:557px;width:38px;height:19px;border:1px solid #f2c80f;border-radius:3.5px;background:#fff"></div>
<div class="r" style="left:1125.6px;top:564.6px;width:4.800000000000182px;height:4.7999999999999545px;background:#f2c200;border-radius:50%"></div>
<div class="t" style="left:1136.19px;top:562.00px;font-size:11px;line-height:11px;color:#2a2f3a;font-weight:400;">47</div>
<div class="t" style="left:861.66px;top:595.00px;font-size:11px;line-height:11px;color:#3573d6;font-weight:400;transform:scaleX(1.0036);transform-origin:left top;">where to watch movies fre...</div>
<div class="t" style="left:1050.99px;top:595.00px;font-size:11px;line-height:11px;color:#222733;font-weight:400;">4.4K</div>
<div class="r" style="left:1118px;top:590px;width:38px;height:19px;border:1px solid #f2c80f;border-radius:3.5px;background:#fff"></div>
<div class="r" style="left:1125.6px;top:597.6px;width:4.800000000000182px;height:4.7999999999999545px;background:#f2c200;border-radius:50%"></div>
<div class="t" style="left:1136.19px;top:595.00px;font-size:11px;line-height:11px;color:#2a2f3a;font-weight:400;">49</div>
<div class="r" style="left:863.5px;top:627px;width:171.20000000000005px;height:27px;border:1px solid #d3d5e1;border-radius:4px;background:#fff"></div>
<svg class="r" style="left:875.0px;top:633px" width="14.0" height="14" viewBox="0 0 14.0 14"><g fill="none" stroke="#151a26" stroke-width="1.5" stroke-linecap="round" stroke-linejoin="round"><path d="M1 7 H12.2"/><path d="M6.6 1.5 L12.2 7 L6.6 12.5"/></g></svg>
<div class="t" style="left:895.50px;top:637.00px;font-size:9px;line-height:9px;color:#20242e;font-weight:400;-webkit-text-stroke:0.14px #20242e;transform:scaleX(0.9294);transform-origin:left top;">VIEW DETAILED REPORT (3,389)</div>
</body></html>
